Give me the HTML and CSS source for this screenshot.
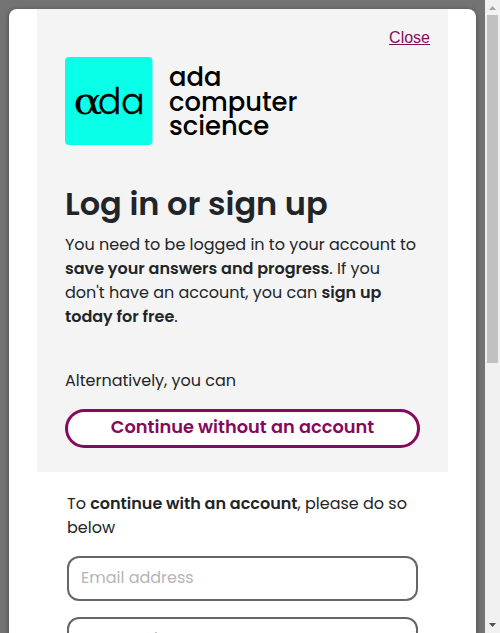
FILE: index.html
```html
<!DOCTYPE html>
<html lang="en">
<head>
<meta charset="utf-8">
<title>Log in or sign up</title>
<link rel="stylesheet" href="styles.css">
</head>
<body>
<div class="viewport">
  <div class="backdrop">
    <main class="modal">
      <section class="intro">
        <a class="close" href="#">Close</a>
        <div class="brand">
          <svg class="logo" viewBox="0 0 88 88" width="88" height="88">
            <rect width="87.500" height="88" rx="4" fill="#0affe9"/>
            <text class="logo-alpha" x="8.500" y="57.200" textLength="29" lengthAdjust="spacingAndGlyphs">α</text>
            <text class="logo-da" x="33" y="57.200" textLength="46.500" lengthAdjust="spacingAndGlyphs">da</text>
          </svg>
          <div class="brand-name"><span>ada</span><span>computer</span><span>science</span></div>
        </div>
        <h1>Log in or sign up</h1>
        <p>You need to be logged in to your account to <b>save your answers and progress</b>. If you don't have an account, you can <b>sign up today for free</b>.</p>
        <p class="alt">Alternatively, you can</p>
        <button class="continue">Continue without an account</button>
      </section>
      <section class="form">
        <p>To <b>continue with an account</b>, please do so below</p>
        <div class="field">Email address</div>
        <div class="field">Password</div>
      </section>
    </main>
  </div>
  <div class="scrollbar">
    <svg width="15" height="15"><path d="M4 10h7L7.500 6z" fill="#a3a3a3"/></svg>
    <div class="thumb"></div>
    <svg class="down" width="15" height="15"><path d="M4 5h7L7.500 9z" fill="#505050"/></svg>
  </div>
</div>
</body>
</html>
```
FILE: styles.css
```css
* { box-sizing: border-box; }
body {
  margin: 0;
  color: #212529;
  font: 16px/24px Poppins, sans-serif;
}
b { font-weight: 600; }
p { margin: 0; }
.viewport { display: flex; height: 633px; overflow: hidden; }
.backdrop { width: 485px; padding: 9px 9px 0; background: #737373; overflow: hidden; }
.modal {
  height: 700px;
  padding: 0 28px;
  border-radius: 8px;
  background: #fff;
  box-shadow: 0 1px 5px rgba(0, 0, 0, .4);
}
.intro {
  display: flex;
  flex-direction: column;
  height: 463px;
  padding: 17px 28px 24px;
  background: #f4f4f4;
}
.close {
  align-self: flex-end;
  margin-right: -10px;
  color: #850a5c;
  font: 16px/24px "Liberation Sans", sans-serif;
}
.brand { display: flex; height: 88px; margin-top: 7px; }
.logo { flex: none; }
.logo text { fill: #000; }
.logo-alpha { font: 37px "DejaVu Serif", serif; }
.logo-da { font: 300 36px Poppins, sans-serif; stroke: #000; stroke-width: .4px; }
.brand-name {
  display: grid;
  grid-template-rows: 25px 24px 24px;
  align-content: start;
  padding: 8px 0 0 16px;
  color: #000;
  font-size: 25.800px;
  font-weight: 500;
  line-height: 24px;
}
h1 { margin: 39px 0 9px; font-size: 32px; font-weight: 600; line-height: 40px; white-space: nowrap; }
.intro .alt { margin-top: 40px; }
.continue {
  height: 39px;
  margin: 16px 0 0;
  padding: 0 0 3px;
  border: 3px solid #850a5c;
  border-radius: 20px;
  background: #fff;
  color: #850a5c;
  font: 600 17.800px/28px Poppins, sans-serif;
  white-space: nowrap;
}
.form { padding: 20px 30px; }
.field {
  height: 45px;
  margin-top: 16px;
  padding: 8px 12px;
  border: 2px solid #666;
  border-radius: 12px;
  color: #b5b5b5;
}
.scrollbar { display: flex; flex-direction: column; width: 15px; background: #f1f1f1; }
.scrollbar svg { display: block; flex: none; }
.thumb { height: 348px; margin: 0 2px; background: #c1c1c1; }
.down { margin-top: auto; }
```
